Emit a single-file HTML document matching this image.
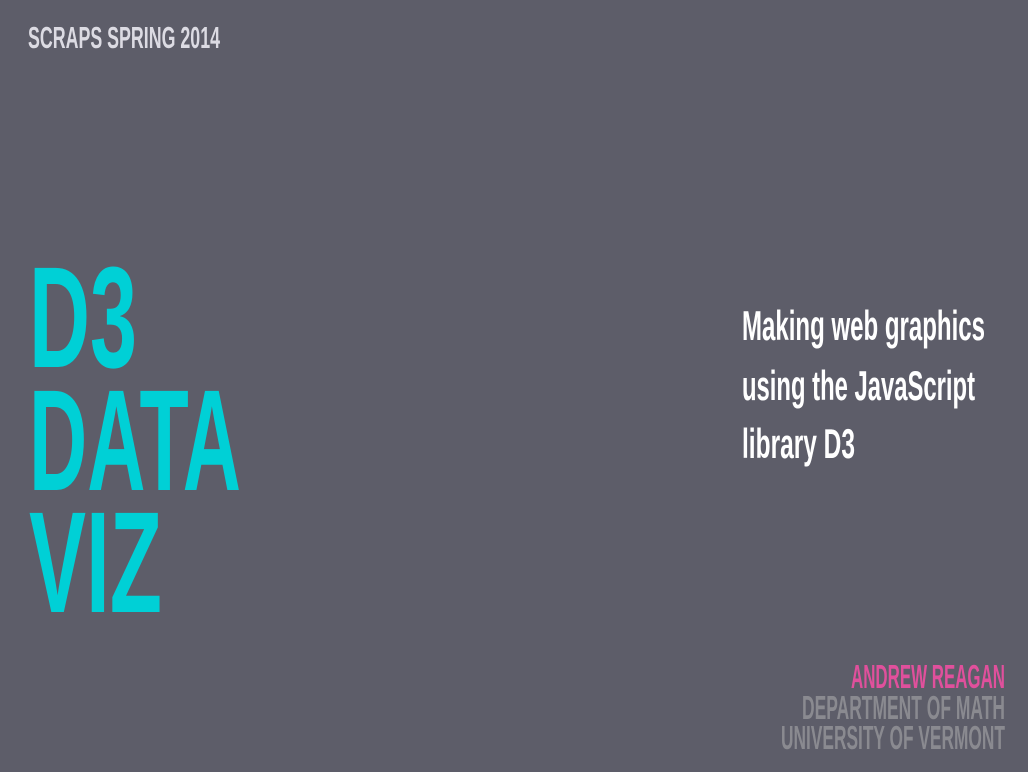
<!DOCTYPE html>
<html><head><meta charset="utf-8"><style>
html,body{margin:0;padding:0;background:#5d5d69;width:1028px;height:772px;overflow:hidden}
svg{display:block}
text{font-family:"Liberation Sans Narrow","Liberation Sans",sans-serif;font-weight:bold}
</style></head><body>
<svg width="1028" height="772" viewBox="0 0 1028 772" xmlns="http://www.w3.org/2000/svg">
<rect width="1028" height="772" fill="#5d5d69"/>
<text x="28" y="48" font-size="31" fill="#dcdbe3" textLength="192" lengthAdjust="spacingAndGlyphs">SCRAPS SPRING 2014</text>
<g fill="#00d0d6" font-size="144">
<text x="29" y="367" textLength="108" lengthAdjust="spacingAndGlyphs">D3</text>
<text x="29" y="490" textLength="212" lengthAdjust="spacingAndGlyphs">DATA</text>
<text x="29" y="612" textLength="133" lengthAdjust="spacingAndGlyphs">VIZ</text>
</g>
<g fill="#ffffff" font-size="42">
<text x="742" y="340" textLength="243" lengthAdjust="spacingAndGlyphs">Making web graphics</text>
<text x="742" y="400" textLength="233" lengthAdjust="spacingAndGlyphs">using the JavaScript</text>
<text x="742" y="458" textLength="113" lengthAdjust="spacingAndGlyphs">library D3</text>
</g>
<text x="851" y="688" font-size="33" fill="#e0509c" textLength="154" lengthAdjust="spacingAndGlyphs">ANDREW REAGAN</text>
<g fill="#8a8a90" font-size="33">
<text x="802" y="719" textLength="203" lengthAdjust="spacingAndGlyphs">DEPARTMENT OF MATH</text>
<text x="781" y="749" textLength="224" lengthAdjust="spacingAndGlyphs">UNIVERSITY OF VERMONT</text>
</g>
</svg>
</body></html>
